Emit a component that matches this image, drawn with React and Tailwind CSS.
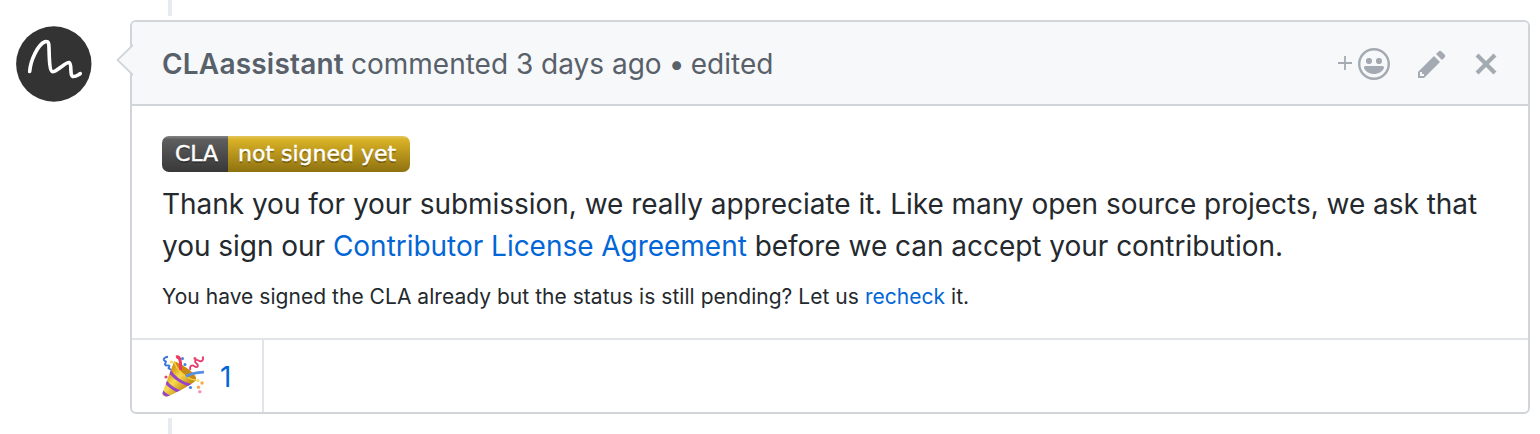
import React from 'react';

function Avatar() {
  return (
    <svg className="mt-[26px] ml-[16px] block h-[76px] w-[76px] shrink-0" viewBox="0 0 76 76" fill="none">
      <circle cx="37.8" cy="38" r="37.7" fill="#333333" />
      <path
        d="M13.700 45.500C14.500 34 22 18.500 29 15.800C32.500 14.800 33 17 33 22C33.300 33 33.500 45.800 36.800 45.800C40 46 50 36 53 36.600C56.500 37.500 53 50.500 57.500 50.500C60.500 50.500 62 48.800 64.300 47.600"
        stroke="#ffffff"
        strokeWidth="3.6"
        strokeLinecap="round"
        strokeLinejoin="round"
      />
    </svg>
  );
}

function Smiley() {
  return (
    <svg className="ml-[6px] block h-8 w-8" viewBox="0 0 16 16" fill="currentColor" fillRule="evenodd">
      <path d="M8 0C3.58 0 0 3.58 0 8s3.58 8 8 8 8-3.58 8-8-3.58-8-8-8zm4.81 12.81a6.72 6.72 0 01-2.17 1.45c-.83.36-1.72.53-2.64.53-.92 0-1.81-.17-2.64-.53-.81-.34-1.55-.83-2.17-1.45a6.773 6.773 0 01-1.45-2.17A6.59 6.59 0 011.210 8c0-.92.17-1.810.53-2.640.34-.81.83-1.550 1.450-2.170.62-.62 1.360-1.110 2.170-1.450A6.590 6.590 0 018 1.210c.92 0 1.810.17 2.640.53.81.34 1.550.83 2.170 1.450.62.62 1.110 1.360 1.450 2.170.36.83.53 1.720.53 2.640 0 .92-.17 1.810-.53 2.640-.34.81-.83 1.550-1.450 2.170zM4 6.800v-.59c0-.66.53-1.190 1.200-1.190h.59c.66 0 1.190.53 1.190 1.190v.59c0 .67-.53 1.200-1.190 1.200H5.200C4.530 8 4 7.470 4 6.800zm5 0v-.59c0-.66.53-1.190 1.200-1.190h.59c.66 0 1.190.53 1.190 1.190v.59c0 .67-.53 1.200-1.190 1.200h-.59C9.530 8 9 7.470 9 6.800zm4 3.200c-.72 1.880-2.910 3-5 3s-4.280-1.130-5-3c-.14-.39.23-1 .66-1h8.590c.41 0 .89.61.75 1z" />
    </svg>
  );
}

function Pencil() {
  return (
    <svg className="ml-[28px] block h-8 w-7" viewBox="0 0 14 16" fill="currentColor" fillRule="evenodd">
      <path d="M0 12v3h3l8-8-3-3-8 8zm3 2H1v-2h1v1h1v1zm10.3-9.3L12 6 9 3l1.3-1.3a.996.996 0 011.41 0l1.59 1.59c.39.39.39 1.02 0 1.41z" />
    </svg>
  );
}

function Close() {
  return (
    <svg className="ml-[28px] block h-8 w-6" viewBox="0 0 12 16" fill="currentColor" fillRule="evenodd">
      <path d="M7.48 8l3.75 3.75-1.48 1.48L6 9.480l-3.750 3.750-1.480-1.480L4.520 8 .77 4.250l1.480-1.480L6 6.520l3.750-3.750 1.480 1.480z" />
    </svg>
  );
}

function PartyPopper() {
  return (
    <svg className="block h-[42px] w-[42px]" viewBox="0 0 42 42" fill="none">
      <defs>
        <linearGradient id="cone" x1="6" y1="18" x2="22" y2="34" gradientUnits="userSpaceOnUse">
          <stop offset="0" stopColor="#d49a14" />
          <stop offset="0.45" stopColor="#f8dc4e" />
          <stop offset="1" stopColor="#c98f16" />
        </linearGradient>
        <clipPath id="coneClip">
          <path d="M12 6.500C19 9 30 17 34 25.500C27 31 13 38.500 5 41.500C1.500 42 0 40.500 0.500 38z" />
        </clipPath>
      </defs>
      <path d="M12 6.500C19 9 30 17 34 25.500C27 31 13 38.500 5 41.500C1.500 42 0 40.500 0.500 38z" fill="url(#cone)" />
      <g clipPath="url(#coneClip)" stroke="#9745c9" strokeWidth="3">
        <path d="M7 15C11 22 20 29 31 31" />
        <path d="M3 26C7 31 12 35 19 37" />
        <path d="M-1 34.500C1 38 3 40 8 42" />
      </g>
      <path d="M12 6.500C18 7.500 32 17 34 22.500C34.500 27 29 24.500 24 21C18 16.500 12 10 12 6.500z" fill="#c78a12" />
      <path d="M12.500 7C14 14 24 24 33.500 25" stroke="#f4cd45" strokeWidth="1.500" />
      <path d="M14 2C18 1 19 6 18.600 15" stroke="#f0375f" strokeWidth="3" />
      <path d="M24 21.500C29 18 35 17.500 42 17.200" stroke="#5590e6" strokeWidth="2.800" />
      <path d="M6 1.800C2 2 0.500 5 3 6C6 7 1 9 4 10.500C7 10 8.500 10.500 6.500 13C7 14 8 13 8.500 15" stroke="#3676dd" strokeWidth="1.900" />
      <path d="M28.500 15C27 11 30 9.500 32 11C36 14 37 10 34 8C32 5.500 34 4 36.500 5.500C40 8 42 4 40.500 1.500" stroke="#e63e70" strokeWidth="1.900" />
      <g fill="#3c83e8">
        <circle cx="20.500" cy="3.500" r="1.500" />
        <circle cx="23" cy="9.500" r="1.500" />
        <circle cx="28.500" cy="32.500" r="1.600" />
      </g>
      <g fill="#e6486d">
        <circle cx="33" cy="3.500" r="1.500" />
        <circle cx="4" cy="22" r="1.600" />
        <circle cx="37.800" cy="36.800" r="1.800" fill="#f49abc" />
      </g>
      <g fill="#f6a94b">
        <circle cx="36.500" cy="32.300" r="1.700" />
        <circle cx="40" cy="28" r="1.700" />
      </g>
      <g fill="#f9e04d">
        <circle cx="9.500" cy="7" r="1.600" />
        <circle cx="36" cy="25.500" r="1.500" />
      </g>
    </svg>
  );
}

function Badge() {
  return (
    <div className="flex h-9 w-[248px] overflow-hidden rounded-[7px] font-['DejaVu_Sans',Verdana,sans-serif] text-[22px] leading-[36px] whitespace-nowrap text-white [-webkit-text-stroke:0.4px_white] [text-shadow:0_2px_0_rgba(1,1,1,0.3)]">
      <span className="w-[66px] bg-linear-to-b from-[#858585] via-[#5e5e5e] via-10% to-[#383838] pl-[13px]">CLA</span>
      <span className="flex-1 bg-linear-to-b from-[#e3c65c] via-[#d9b226] via-10% to-[#8f7210] pl-[10px]">not signed yet</span>
    </div>
  );
}

export default function App() {
  return (
    <div className="relative flex h-[434px] w-[1540px] overflow-hidden bg-white font-[Inter,sans-serif] text-[28px] text-[#24292e]">
      <div className="absolute top-0 left-[168px] h-4 w-1 bg-[#e6ebf1]" />
      <div className="absolute top-[418px] left-[168px] h-4 w-1 bg-[#e6ebf1]" />
      <Avatar />
      <article className="relative mt-5 ml-[38px] flex h-[394px] w-[1400px] flex-col rounded-[6px] border-2 border-[#d1d5da] bg-white">
        <header className="flex h-[84px] shrink-0 items-center justify-between rounded-t-[4px] border-b-2 border-[#d1d5da] bg-[#f6f8fa] pt-[2px] pr-[30px] pl-[30px] text-[#586069]">
          <h3 className="whitespace-nowrap">
            <strong className="inline-block w-[189px] font-semibold tracking-[0.2px]">CLAassistant</strong>
            <span>commented 3 days ago</span>
            <span className="tracking-[-0.8px]"> • </span>
            <span>edited</span>
          </h3>
          <div className="flex items-center text-[#a3aab1]">
            <svg className="-mt-[2px] block h-[14px] w-[14px]" viewBox="0 0 14 14" stroke="currentColor" strokeWidth="1.800">
              <path d="M0 7H14M7 0V14" />
            </svg>
            <Smiley />
            <Pencil />
            <Close />
          </div>
        </header>
        <svg className="absolute top-[21px] -left-[17px] h-[34px] w-[18px]" viewBox="0 0 18 34">
          <path d="M18 2L2.500 17L18 32" fill="#f6f8fa" stroke="#d1d5da" strokeWidth="1.800" />
        </svg>
        <section className="flex-1 px-[30px] pt-[30px]">
          <Badge />
          <p className="mt-[11px] leading-[42px] tracking-[-0.03px] whitespace-nowrap">
            <span>Thank you for your submission, we really appreciate it. Like many open source projects, we ask that</span>
            <br />
            <span>you sign our </span>
            <a className="text-[#0366d6]">Contributor License Agreement</a>
            <span> before we can accept your contribution.</span>
          </p>
          <p className="mt-[13px] text-[21px] leading-[34px] tracking-[0.035px] whitespace-nowrap">
            You have signed the CLA already but the status is still pending? Let us <a className="text-[#0366d6]">recheck</a> it.
          </p>
        </section>
        <footer className="flex h-[74px] shrink-0 border-t-2 border-[#e1e4e8]">
          <button className="flex w-[132px] items-center border-r-2 border-[#e1e4e8] pl-[30px] text-[#0366d6]">
            <PartyPopper />
            <span className="ml-[16px] pt-[1px]">1</span>
          </button>
        </footer>
      </article>
    </div>
  );
}
